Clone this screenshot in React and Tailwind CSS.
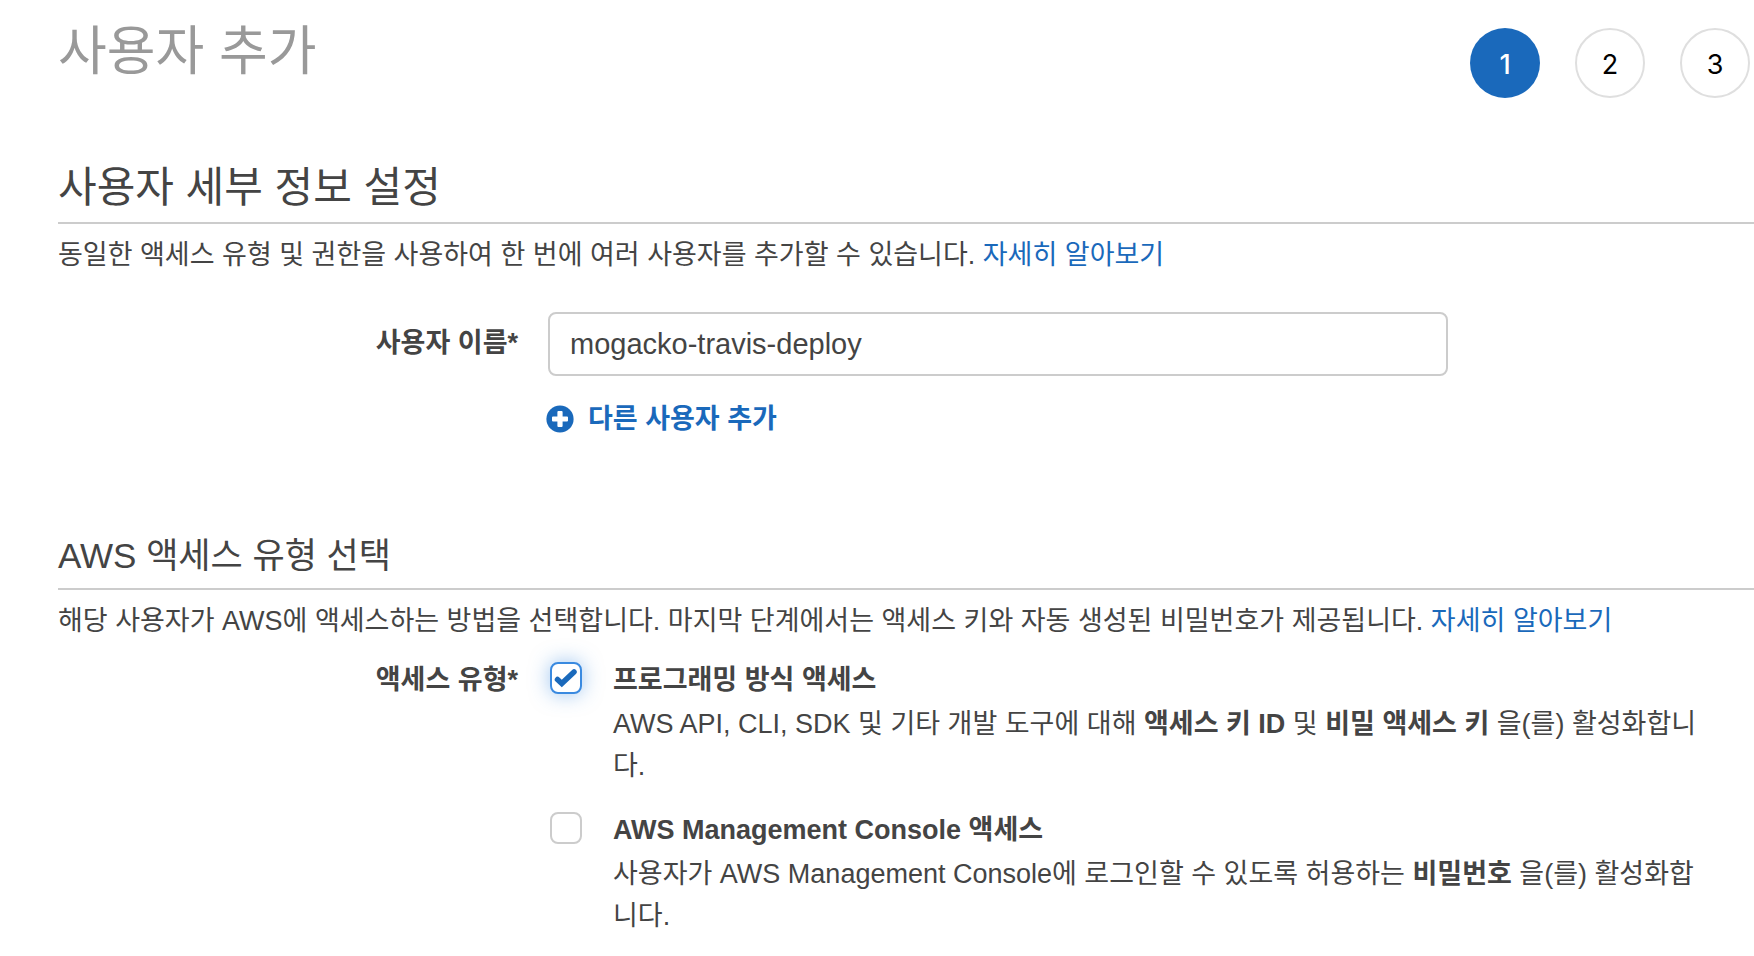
import { useState } from "react";

const STEPS = [1, 2, 3];

function StepIndicator({ current }) {
  return (
    <ol className="flex shrink-0 gap-[35px] pt-7 pr-1" aria-label="단계">
      {STEPS.map((step) => (
        <li
          key={step}
          aria-current={step === current ? "step" : undefined}
          className={
            step === current
              ? "flex size-[70px] items-center justify-center rounded-full bg-[#1a69bb] pt-1 font-['Inter',sans-serif] text-[27px] font-medium text-white"
              : "flex size-[70px] items-center justify-center rounded-full border-2 border-[#dfdfdf] pt-1 font-['Inter',sans-serif] text-[27px] text-black"
          }
        >
          {step}
        </li>
      ))}
    </ol>
  );
}

function PlusCircle() {
  return (
    <svg viewBox="0 0 28 28" className="size-7 shrink-0" aria-hidden="true">
      <circle cx="14" cy="14" r="13.6" fill="#1a69bb" />
      <path
        d="M12.4 6h3.2q1 0 1 1v4.4H21q1 0 1 1v3.2q0 1-1 1h-4.400V21q0 1-1 1h-3.200q-1 0-1-1v-4.400H7q-1 0-1-1v-3.200q0-1 1-1h4.400V7q0-1 1-1Z"
        fill="#fff"
      />
    </svg>
  );
}

function AccessOption({ id, title, checked, onChange, children }) {
  return (
    <div className="flex items-start">
      <span className="relative mt-[3px] mr-[31px] size-8 shrink-0">
        <input
          id={id}
          type="checkbox"
          checked={checked}
          onChange={(event) => onChange(event.target.checked)}
          className="peer block size-8 appearance-none rounded-lg border-2 border-[#ccc] bg-white checked:border-[#3a8ae0] checked:shadow-[0_0_20px_rgba(58,138,224,0.5)]"
        />
        <svg
          viewBox="0 0 32 32"
          className="pointer-events-none absolute inset-0 hidden size-8 peer-checked:block"
          aria-hidden="true"
        >
          <path
            d="M7.500 17.500 11.800 21.500 24 10"
            fill="none"
            stroke="#1a69bb"
            strokeWidth="5.500"
            strokeLinecap="round"
            strokeLinejoin="miter"
          />
        </svg>
      </span>
      <div className="min-w-0 flex-1">
        <label htmlFor={id} className="block leading-[42px] font-bold">
          {title}
        </label>
        <p className="mt-[2px]">{children}</p>
      </div>
    </div>
  );
}

export default function App() {
  const [userName, setUserName] = useState("mogacko-travis-deploy");
  const [programmatic, setProgrammatic] = useState(true);
  const [consoleAccess, setConsoleAccess] = useState(false);

  return (
    <main className="min-h-screen bg-white pl-[58px] font-['Liberation_Sans','Noto_Sans_CJK_KR',sans-serif] text-[27px] leading-[42px] text-[#444]">
      <header className="flex items-start justify-between">
        <h1 className="pt-4 text-[53px] leading-[72px] text-[#999]">사용자 추가</h1>
        <StepIndicator current={1} />
      </header>

      <section className="pt-[60px]">
        <h2 className="border-b-2 border-[#ccc] pb-1 text-[42px] leading-[60px]">
          사용자 세부 정보 설정
        </h2>
        <p className="pt-[10px]">
          동일한 액세스 유형 및 권한을 사용하여 한 번에 여러 사용자를 추가할 수 있습니다.{" "}
          <a href="#users" className="text-[#1a69bb]">자세히 알아보기</a>
        </p>

        <div className="flex items-start pt-9">
          <label htmlFor="user-name" className="w-[460px] shrink-0 pt-[10px] text-right font-bold">
            사용자 이름*
          </label>
          <div className="ml-[30px] min-w-0 flex-1">
            <input
              id="user-name"
              type="text"
              value={userName}
              onChange={(event) => setUserName(event.target.value)}
              className="block h-16 w-full max-w-[900px] rounded-lg border-2 border-[#ccc] bg-white px-5 text-[29px]"
            />
            <button
              type="button"
              className="mt-[22px] -ml-[2px] flex items-center gap-[14px] font-bold text-[#1a69bb]"
            >
              <PlusCircle />
              다른 사용자 추가
            </button>
          </div>
        </div>
      </section>

      <section className="pt-[88px]">
        <h2 className="border-b-2 border-[#ccc] pb-1 text-[35px] leading-[56px]">
          AWS 액세스 유형 선택
        </h2>
        <p className="pt-[10px]">
          해당 사용자가 AWS에 액세스하는 방법을 선택합니다. 마지막 단계에서는 액세스 키와 자동 생성된 비밀번호가 제공됩니다.{" "}
          <a href="#access" className="text-[#1a69bb]">자세히 알아보기</a>
        </p>

        <div role="group" aria-labelledby="access-type" className="flex items-start pt-[17px]">
          <span id="access-type" className="w-[460px] shrink-0 text-right font-bold">
            액세스 유형*
          </span>
          <div className="ml-8 flex min-w-0 flex-1 flex-col gap-[22px] pr-12">
            <AccessOption
              id="programmatic"
              title="프로그래밍 방식 액세스"
              checked={programmatic}
              onChange={setProgrammatic}
            >
              AWS API, CLI, SDK 및 기타 개발 도구에 대해 <strong>액세스 키 ID</strong> 및{" "}
              <strong>비밀 액세스 키</strong> 을(를) 활성화합니다.
            </AccessOption>
            <AccessOption
              id="console"
              title="AWS Management Console 액세스"
              checked={consoleAccess}
              onChange={setConsoleAccess}
            >
              사용자가 AWS Management Console에 로그인할 수 있도록 허용하는{" "}
              <strong>비밀번호</strong> 을(를) 활성화합니다.
            </AccessOption>
          </div>
        </div>
      </section>
    </main>
  );
}
